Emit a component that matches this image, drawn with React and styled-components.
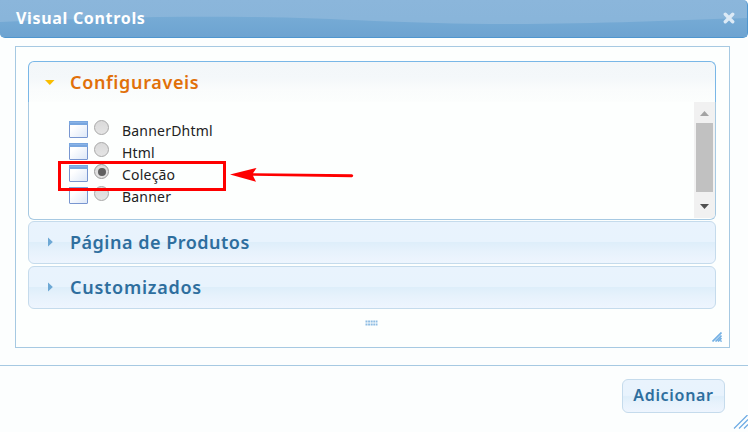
import React from 'react';
import styled, { createGlobalStyle } from 'styled-components';

const Global = createGlobalStyle`
  * { box-sizing: border-box; }
  html, body { margin: 0; overflow: hidden; background: #fcfffe; }
  svg { display: block; }
`;

const Dialog = styled.div`
  position: relative;
  display: flex;
  flex-direction: column;
  width: 748px;
  height: 432px;
  background: #fcfefe;
  font-family: "Noto Sans", "Open Sans", sans-serif;
`;

const TitleBar = styled.header`
  position: relative;
  display: flex;
  align-items: center;
  justify-content: space-between;
  flex: none;
  height: 38px;
  padding: 0 12px 1px 16px;
  overflow: hidden;
  border: 1px solid #4f96cf;
  border-width: 0 1px 1px 0;
  border-radius: 0 5px 5px 5px;
  background: linear-gradient(#8bb6db, #87b4d9);
`;

const TitleWave = styled.svg`
  position: absolute;
  inset: 0;
`;

const Title = styled.h1`
  position: relative;
  margin: 0;
  color: #fff;
  font-size: 16px;
  line-height: 22px;
  font-weight: 700;
  letter-spacing: 0.68px;
`;

const CloseIcon = styled.svg`
  position: relative;
`;

const Panel = styled.main`
  display: flex;
  flex-direction: column;
  flex: none;
  width: 715px;
  height: 302px;
  margin: 8px 0 0 15px;
  padding: 14px 13px 0 12px;
  border: 1px solid #a6c9e2;
  background: #fdfffe;
`;

const SectionHeader = styled.h3`
  display: flex;
  align-items: center;
  flex: none;
  height: ${(p) => (p.$open ? 41 : 43)}px;
  margin: 0 0 ${(p) => (p.$open ? 0 : 2)}px;
  padding: 0 0 1px 14px;
  border: 1px solid ${(p) => (p.$open ? '#79b7e7' : '#c5dbec')};
  border-bottom-width: ${(p) => (p.$open ? 0 : 1)}px;
  border-radius: ${(p) => (p.$open ? '6px 6px 0 0' : '6px')};
  background: ${(p) =>
    p.$open
      ? 'linear-gradient(#f3f7f9 0%, #f4f8fa 40%, #fafcfc 68%, #fcfefd 100%)'
      : 'linear-gradient(#e9f3fd 0%, #e8f3fd 48%, #deeefa 50%, #e7f2fc 72%, #eef5fe 100%)'};
  color: ${(p) => (p.$open ? '#e17009' : '#2e6e9e')};
  font-size: 18px;
  line-height: 26px;
  font-weight: 600;
  letter-spacing: ${(p) => p.$tracking}px;
`;

const Arrow = styled.svg`
  flex: none;
  margin-right: 13px;
`;

const SectionBody = styled.div`
  display: flex;
  justify-content: space-between;
  flex: none;
  height: 118px;
  margin-bottom: 1px;
  overflow: hidden;
  border: 1px solid #a6c9e2;
  border-top: 0;
  border-radius: 0 0 6px 6px;
`;

const Options = styled.div`
  display: flex;
  flex-direction: column;
  padding: 18px 0 0 40px;
`;

const Option = styled.label`
  display: flex;
  flex: none;
  height: 22px;
  color: #222;
  font-size: 14px;
  line-height: 22px;
  letter-spacing: 0.2px;
`;

const WindowIcon = styled.svg`
  margin: 1px 6px 0 0;
`;

const Radio = styled.span`
  display: flex;
  align-items: center;
  justify-content: center;
  width: 15px;
  height: 15px;
  margin-right: 13px;
  border: 1px solid ${(p) => (p.$checked ? '#999' : '#a8a8a8')};
  border-radius: 50%;
  background: linear-gradient(#dadada, #e4e4e4);
  &::after {
    content: "";
    width: 8px;
    height: 8px;
    border-radius: 50%;
    background: ${(p) => (p.$checked ? '#606060' : 'transparent')};
  }
`;

const OptionText = styled.span``;

const ScrollTrack = styled.div`
  display: flex;
  flex-direction: column;
  align-items: center;
  width: 21px;
  height: 116px;
  padding: 9px 0 9px;
  background: #f1f1f1;
`;

const ScrollThumb = styled.div`
  width: 17px;
  height: 69px;
  margin: 7px 0 12px;
  background: #c1c1c1;
`;

const Grip = styled.svg`
  margin: 9px auto 0 337px;
`;

const PanelGrip = styled.svg`
  margin: 6px -6px 0 auto;
`;

const Footer = styled.footer`
  display: flex;
  justify-content: flex-end;
  flex: none;
  height: 67px;
  margin-top: 17px;
  padding: 13px 23px 0;
  border-top: 1px solid #a6c9e2;
`;

const AddButton = styled.button`
  width: 103px;
  height: 34px;
  padding: 0 0 3px;
  border: 1px solid #c5dbec;
  border-radius: 6px;
  background: linear-gradient(#e9f3fd 0%, #e8f3fd 48%, #deeefa 52%, #e7f2fc 72%, #eef5fe 100%);
  color: #2e6e9e;
  font: 600 16px/22px "Noto Sans", "Open Sans", sans-serif;
  letter-spacing: 0.7px;
`;

const DialogGrip = styled.svg`
  position: absolute;
  right: 0;
  bottom: 0;
`;

const Highlight = styled.div`
  position: absolute;
  left: 58px;
  top: 161px;
  width: 168px;
  height: 30px;
  border: 3px solid #fe0000;
`;

const Pointer = styled.svg`
  position: absolute;
  left: 228px;
  top: 164px;
`;

const options = [
  { name: 'BannerDhtml' },
  { name: 'Html' },
  { name: 'Coleção', checked: true },
  { name: 'Banner' },
];

function SectionArrow({ open }) {
  return (
    <Arrow width="14" height="14" viewBox="0 0 14 14">
      {open ? <path d="M2 5h9.5L6.8 10z" fill="#f9bd01" /> : <path d="M5 2.5v9L9.8 7z" fill="#6da8d5" />}
    </Arrow>
  );
}

function WindowGlyph() {
  return (
    <WindowIcon width="19" height="17" viewBox="0 0 19 17">
      <defs>
        <linearGradient id="pane" x2="1" y2="1">
          <stop offset="0.3" stopColor="#fff" />
          <stop offset="1" stopColor="#dce7f7" />
        </linearGradient>
      </defs>
      <rect x="0.5" y="0.5" width="18" height="16" rx="0.5" fill="url(#pane)" stroke="#7896d0" />
      <path d="M0 0h19v4H0z" fill="#78a6df" />
      <path d="M1 1.5h17" stroke="#8ab3e6" />
    </WindowIcon>
  );
}

export default function App() {
  return (
    <Dialog>
      <Global />
      <TitleBar>
        <TitleWave width="748" height="37" viewBox="0 0 748 37">
          <defs>
            <linearGradient id="wave" gradientUnits="userSpaceOnUse" x1="0" y1="17" x2="0" y2="37">
              <stop stopColor="#76abd5" />
              <stop offset="1" stopColor="#6da3d1" />
            </linearGradient>
          </defs>
          <path d="M0 22C90 18 170 16 250 17C340 18 400 24 510 24C600 24 680 20 748 18V37H0z" fill="url(#wave)" />
        </TitleWave>
        <Title>Visual Controls</Title>
        <CloseIcon width="12" height="12" viewBox="0 0 12 12">
          <path d="M2.3 2.3l7.4 7.4M9.7 2.3L2.3 9.7" stroke="#dceaf6" strokeWidth="3.4" strokeLinecap="round" />
        </CloseIcon>
      </TitleBar>
      <Panel>
        <SectionHeader $open $tracking={0.65}>
          <SectionArrow open />
          Configuraveis
        </SectionHeader>
        <SectionBody>
          <Options>
            {options.map((o) => (
              <Option key={o.name}>
                <WindowGlyph />
                <Radio $checked={o.checked} />
                <OptionText>{o.name}</OptionText>
              </Option>
            ))}
          </Options>
          <ScrollTrack>
            <svg width="9" height="5"><path d="M0 5L4.5 0L9 5z" fill="#a3a3a3" /></svg>
            <ScrollThumb />
            <svg width="9" height="5"><path d="M0 0H9L4.5 5z" fill="#505050" /></svg>
          </ScrollTrack>
        </SectionBody>
        <SectionHeader $tracking={0.5}>
          <SectionArrow />
          Página de Produtos
        </SectionHeader>
        <SectionHeader $tracking={0.73}>
          <SectionArrow />
          Customizados
        </SectionHeader>
        <Grip width="13" height="6">
          <path d="M0.5 1.5h12M0.5 4.5h12" stroke="#8fbde3" strokeWidth="2" strokeDasharray="2 0.6" />
        </Grip>
        <PanelGrip width="10" height="10">
          <path d="M0.5 9.5l9-9M3.5 9.5l6-6M6 9.5l3.5-3.5M8.5 9.5l1-1" stroke="#75b1e4" strokeWidth="1.7" />
        </PanelGrip>
      </Panel>
      <Footer>
        <AddButton>Adicionar</AddButton>
      </Footer>
      <DialogGrip width="15" height="17">
        <path d="M1 13.5L14.5 0M6 13.5l9-9M11 13.5l4-4" stroke="#70ace4" strokeWidth="1.3" />
      </DialogGrip>
      <Highlight />
      <Pointer width="127" height="22">
        <path d="M2 10.5L28.5 4L25 9.2L124 10.2Q126.5 11.7 124 13.2L25 11.8L28 17.8z" fill="#fe0000" />
      </Pointer>
    </Dialog>
  );
}
